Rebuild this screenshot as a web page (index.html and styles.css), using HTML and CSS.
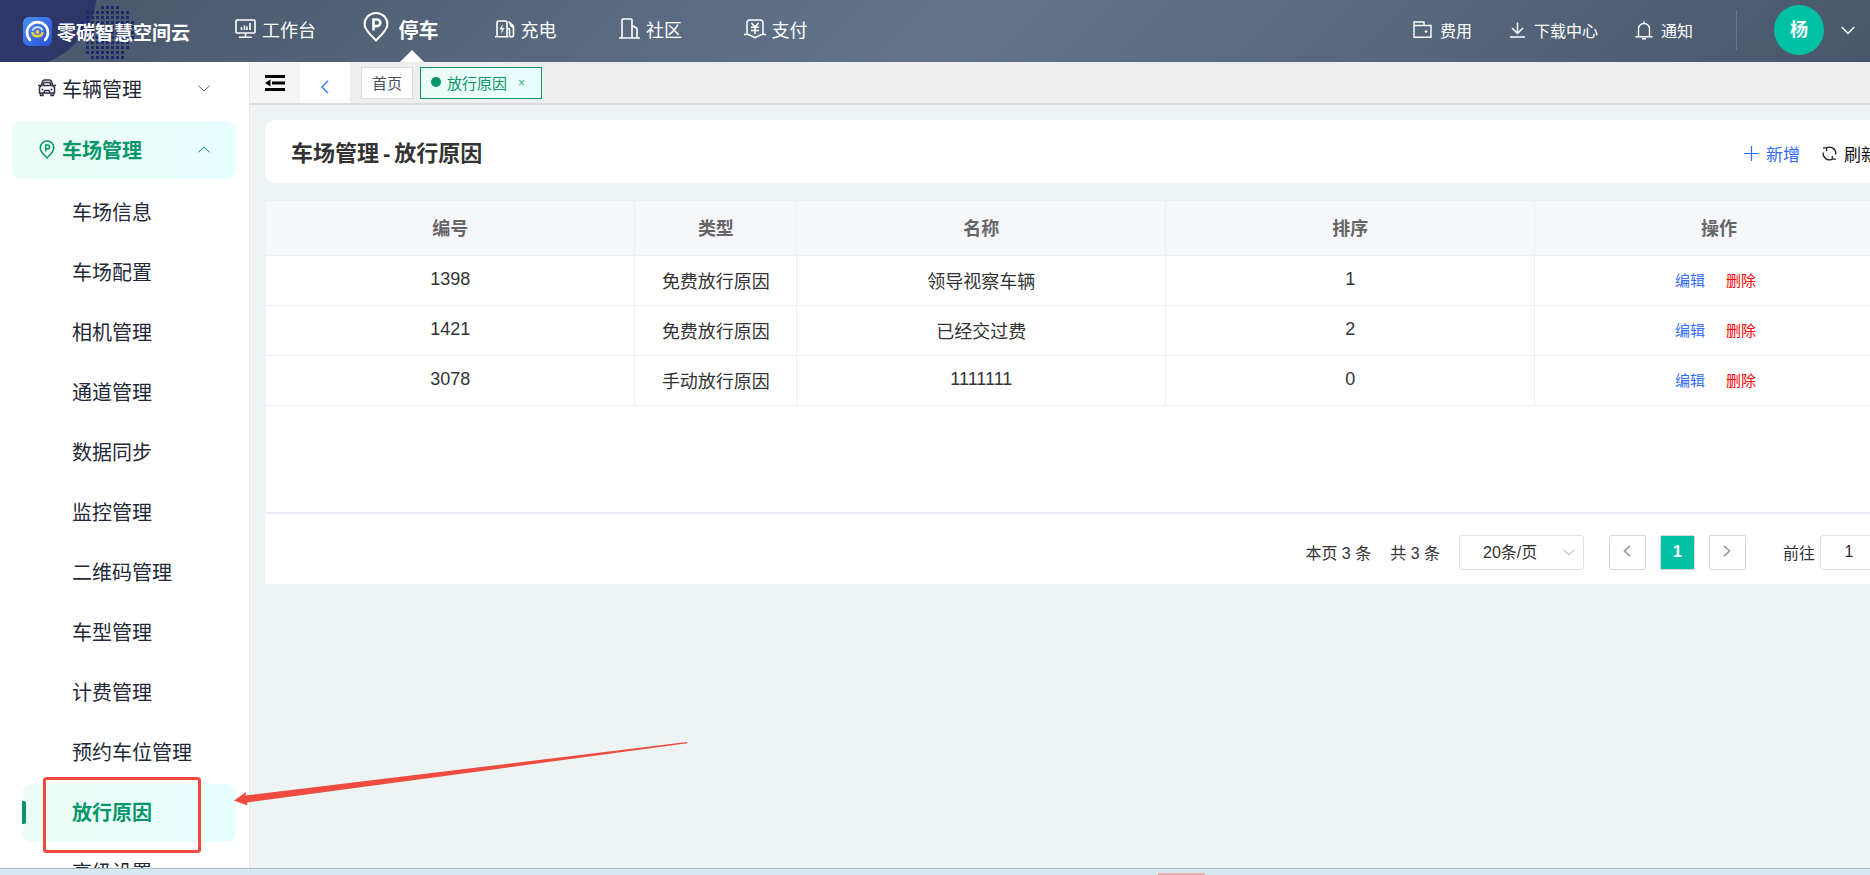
FILE: index.html
```
<!DOCTYPE html>
<html lang="zh-CN">
  <head>
    <meta charset="UTF-8" />
    <meta name="viewport" content="width=device-width, initial-scale=1.0" />
    <title>车场管理-放行原因</title>
    <link rel="stylesheet" href="styles.css">
  </head>
  <body>
    <header class="navbar">
      <svg class="navbar-bg" width="220" height="62" viewBox="0 0 220 62">
        <defs>
          <pattern id="dots" x="81" y="6" width="5" height="5" patternUnits="userSpaceOnUse">
            <rect width="3" height="3" fill="#1b2a6b" />
          </pattern>
        </defs>
        <circle cx="20" cy="-10" r="77" fill="#2e3768" />
        <path d="M101 6h20v5h10v10h5v20h-5v10h-5v9H91v-5h-5V41h-5V21h5V11h15z" fill="url(#dots)" />
      </svg>
      <a class="logo" href="#">
        <svg width="29" height="29" viewBox="0 0 29 29">
          <defs>
            <linearGradient id="logoFill" x1="0" y1="0" x2="1" y2="1">
              <stop offset="0" stop-color="#4a90f5" />
              <stop offset="1" stop-color="#2b50d8" />
            </linearGradient>
          </defs>
          <rect width="29" height="29" rx="6" fill="url(#logoFill)" />
          <path d="M7 23a10.500 10.500 0 1 1 15 0" fill="none" stroke="#fff" stroke-width="2.600" stroke-linecap="round" />
          <path d="M9.600 13.500a5.200 5.200 0 0 1 9.800 0" fill="none" stroke="#dfe9ff" stroke-width="1.800" />
          <path d="M9.300 15a5.300 5.300 0 0 0 10.400 0" fill="none" stroke="#f5cf45" stroke-width="2.400" />
          <circle cx="14.500" cy="15" r="2" fill="#f5cf45" />
        </svg>
        <span>零碳智慧空间云</span>
      </a>
      <nav class="links">
        <a class="link" href="#">
          <svg width="21" height="20" viewBox="0 0 21 20" fill="none" stroke="#fff" stroke-width="1.600">
            <rect x="1" y="1" width="19" height="13" rx="1" />
            <path d="M6.500 11V8M9.500 11V6.500M12 11V7.500M15 11V4M10.500 14v4M4 18.200h13" />
          </svg>
          工作台
        </a>
        <a class="link active" href="#">
          <svg width="26" height="30" viewBox="0 0 26 30" fill="none" stroke="#fff" stroke-width="2">
            <path d="M13 28.500C8 23 1.500 18 1.500 12.200a11.500 11.200 0 0 1 23 0C24.500 18 18 23 13 28.500z" />
            <path d="M10.500 18.500V7.500h3.500a3.300 3.300 0 0 1 0 6.600h-3.500" stroke-width="2.600" />
          </svg>
          停车
        </a>
        <a class="link" href="#">
          <svg width="20" height="20" viewBox="0 0 20 20" fill="none" stroke="#fff" stroke-width="1.600">
            <path d="M2 17.500V3.500A1.500 1.500 0 0 1 3.500 2h7A1.500 1.500 0 0 1 12 3.500v14M0 17.700h13.500M12 9.500h1.500a1 1 0 0 1 1 1v5.500a2 2 0 0 0 4 0V7l-5-4.500" />
            <path d="M7.800 5L4.500 10.500h2.300L6 15l3.600-6H7.300z" fill="#fff" stroke="none" />
            <path d="M14 3l4.500 4v3L15 7z" fill="#fff" stroke="none" />
          </svg>
          充电
        </a>
        <a class="link" href="#">
          <svg width="21" height="21" viewBox="0 0 21 21" fill="none" stroke="#fff" stroke-width="1.600">
            <path d="M3 20V2a1 1 0 0 1 1-1h8a1 1 0 0 1 1 1v18M13 7.500l4.500 2.500a1 1 0 0 1 .5 1v9M0 20h21" />
          </svg>
          社区
        </a>
        <a class="link" href="#">
          <svg width="22" height="20" viewBox="0 0 22 20" fill="none" stroke="#fff" stroke-width="1.500">
            <path d="M3 15V3.500A2.500 2.500 0 0 1 5.500 1h11A2.500 2.500 0 0 1 19 3.500V15M0 15.500h4.500L11 18.700l6.500-3.200H22" />
            <path d="M7.500 4L11 8l3.500-4M11 8v7M7 8.200h8M7 11.500h8" />
          </svg>
          支付
        </a>
      </nav>
      <div class="tools">
        <a href="#">
          <svg width="19" height="18" viewBox="0 0 19 18" fill="none" stroke="#fff" stroke-width="1.400">
            <path d="M1 16.300V1h10v3.500M1 4.500h17v11.800H1z" />
            <circle cx="13" cy="10.500" r="1.300" fill="#fff" stroke="none" />
          </svg>
          费用
        </a>
        <a href="#">
          <svg width="17" height="16" viewBox="0 0 17 16" fill="none" stroke="#fff" stroke-width="1.500">
            <path d="M8.500 0.500v11M3 6l5.500 5.500L14 6M1 15h15" />
          </svg>
          下载中心
        </a>
        <a href="#">
          <svg width="18" height="19" viewBox="0 0 18 19" fill="none" stroke="#fff" stroke-width="1.400">
            <path d="M3.500 15.500V8a5.500 5.500 0 0 1 11 0v7.500M0.500 15.700h17M9 .3v2M7 17.800h4" />
          </svg>
          通知
        </a>
        <span class="divider"></span>
        <button class="user" type="button">
          <span class="avatar">杨</span>
          <svg width="14" height="9" viewBox="0 0 14 9" fill="none" stroke="#fff" stroke-width="1.500">
            <path d="M0.700 1l6.300 6.500L13.300 1" />
          </svg>
        </button>
      </div>
    </header>

    <div class="container">
      <aside class="sidebar">
        <button class="menu-title" type="button">
          <svg class="menu-icon" width="18" height="18" viewBox="0 0 18 18" fill="none" stroke="#303648" stroke-width="1.500">
            <path d="M3 7l1.500-4.500C4.800 1.500 5.500 1 6.500 1h5c1 0 1.700.5 2 1.500L15 7l1.500 1.500v5.500h-15V8.500L3 7zM5 6.500h8l-1-3H6zM0 6.500h2.500M15.500 6.500H18M2.500 14v2.500h2.500V14M13 14v2.500h2.500V14M6 13.500l1-2h4l1 2" />
            <circle cx="4.500" cy="10.500" r="1" fill="#303648" stroke="none" />
            <circle cx="13.500" cy="10.500" r="1" fill="#303648" stroke="none" />
          </svg>
          <span>车辆管理</span>
          <svg class="arrow" width="12" height="7" viewBox="0 0 12 7" fill="none" stroke="#4b5563">
            <path d="M.5 .8L6 6 11.500 .8" />
          </svg>
        </button>
        <button class="menu-title active" type="button">
          <svg class="menu-icon" width="18" height="19" viewBox="0 0 18 19" fill="none" stroke="#059669" stroke-width="1.500">
            <path d="M9 18C6 14.500 2.200 12 2.200 7.700a6.800 6.700 0 0 1 13.600 0C15.800 12 12 14.500 9 18z" />
            <path d="M7.700 11.500V5h2a1.900 1.900 0 0 1 0 3.800h-2" />
          </svg>
          <span>车场管理</span>
          <svg class="arrow" width="12" height="7" viewBox="0 0 12 7" fill="none" stroke="#059669">
            <path d="M.5 6.200L6 1l5.500 5.200" />
          </svg>
        </button>
        <ul class="submenu">
          <li><a href="#">车场信息</a></li>
          <li><a href="#">车场配置</a></li>
          <li><a href="#">相机管理</a></li>
          <li><a href="#">通道管理</a></li>
          <li><a href="#">数据同步</a></li>
          <li><a href="#">监控管理</a></li>
          <li><a href="#">二维码管理</a></li>
          <li><a href="#">车型管理</a></li>
          <li><a href="#">计费管理</a></li>
          <li><a href="#">预约车位管理</a></li>
          <li><a class="active" href="#">放行原因</a></li>
          <li><a href="#">高级设置</a></li>
        </ul>
      </aside>

      <main class="contents">
        <div class="tabs">
          <button class="fold" type="button" aria-label="收起菜单">
            <svg width="20" height="16" viewBox="0 0 20 16" fill="#000">
              <path d="M0 0h20v3H0zM7 6.500h13v3H7zM0 13h20v3H0zM0 8l5.500-3.500v7z" />
            </svg>
          </button>
          <button class="back" type="button" aria-label="返回">
            <svg width="8" height="14" viewBox="0 0 8 14" fill="none" stroke="#3b78ff" stroke-width="1.400">
              <path d="M7 .7L1 7l6 6.300" />
            </svg>
          </button>
          <a class="tab" href="#">首页</a>
          <a class="tab active" href="#"><i class="dot"></i>放行原因<span class="close">×</span></a>
        </div>

        <div class="page">
          <div class="page-title">
            <h1>车场管理<span class="dash">-</span>放行原因</h1>
            <div class="actions">
              <button class="add" type="button">
                <svg width="15" height="15" viewBox="0 0 15 15" stroke="#2f6bff" stroke-width="1.200">
                  <path d="M7.500 0v15M0 7.500h15" />
                </svg>
                新增
              </button>
              <button type="button">
                <svg width="15" height="15" viewBox="0 0 15 15" fill="none" stroke="#222" stroke-width="1.300">
                  <path d="M4 2.200A6.300 6.300 0 0 1 13.700 8.500M11 12.800A6.300 6.300 0 0 1 1.300 6.500M1 1.800h3.700v3.200M14 13.200h-3.700V10" />
                </svg>
                刷新
              </button>
            </div>
          </div>

          <div class="panel">
            <div class="table-box">
              <table>
                <thead>
                  <tr>
                    <th>编号</th>
                    <th class="type">类型</th>
                    <th>名称</th>
                    <th>排序</th>
                    <th>操作</th>
                  </tr>
                </thead>
                <tbody>
                  <tr>
                    <td>1398</td>
                    <td>免费放行原因</td>
                    <td>领导视察车辆</td>
                    <td>1</td>
                    <td><a class="edit" href="#">编辑</a><a class="delete" href="#">删除</a></td>
                  </tr>
                  <tr>
                    <td>1421</td>
                    <td>免费放行原因</td>
                    <td>已经交过费</td>
                    <td>2</td>
                    <td><a class="edit" href="#">编辑</a><a class="delete" href="#">删除</a></td>
                  </tr>
                  <tr>
                    <td>3078</td>
                    <td>手动放行原因</td>
                    <td>1111111</td>
                    <td>0</td>
                    <td><a class="edit" href="#">编辑</a><a class="delete" href="#">删除</a></td>
                  </tr>
                </tbody>
              </table>
            </div>
            <div class="footer">
              <span class="count">本页 3 条</span>
              <span class="count">共 3 条</span>
              <div class="size">
                <select aria-label="每页条数">
                  <option>20条/页</option>
                </select>
                <svg width="12" height="7" viewBox="0 0 12 7" fill="none" stroke="#a8abb2">
                  <path d="M.5 .8L6 6 11.500 .8" />
                </svg>
              </div>
              <div class="pager">
                <button type="button" aria-label="上一页">
                  <svg width="8" height="12" viewBox="0 0 8 12" fill="none" stroke="#999" stroke-width="1.600">
                    <path d="M7 .8L1.500 6 7 11.200" />
                  </svg>
                </button>
                <button class="current" type="button">1</button>
                <button type="button" aria-label="下一页">
                  <svg width="8" height="12" viewBox="0 0 8 12" fill="none" stroke="#999" stroke-width="1.600">
                    <path d="M1 .8L6.500 6 1 11.200" />
                  </svg>
                </button>
              </div>
              <label for="jump">前往</label>
              <input type="text" id="jump" name="jump" value="1" />
            </div>
          </div>
        </div>
      </main>
    </div>

    <div class="taskbar"><span></span></div>

    <!-- annotation -->
    <svg class="mark" width="700" height="875" viewBox="0 0 700 875">
      <rect x="44.500" y="778.500" width="155" height="73" rx="2" fill="none" stroke="#f04b3e" stroke-width="3" />
      <path d="M234 800.500L246 792l-.5 3.500L687 742l.3 1.300L247 802.500l.5 3z" fill="#f04b3e" />
    </svg>
  </body>
</html>
```
FILE: styles.css
```
* {
  box-sizing: border-box;
  font-family: "Liberation Sans", "Noto Sans CJK SC", sans-serif;
}
html {
  overflow: hidden;
}
body {
  margin: 0;
  min-width: 1920px;
  height: 100vh;
  display: flex;
  flex-direction: column;
  overflow: hidden;
  color: #333;
  background-color: #eef4f4;
}
a {
  color: inherit;
  text-decoration: none;
}
button {
  border: none;
  padding: 0;
  background: none;
  cursor: pointer;
}
svg {
  flex-shrink: 0;
}
.navbar {
  position: relative;
  z-index: 1;
  flex-shrink: 0;
  display: flex;
  align-items: center;
  height: 62px;
  color: white;
  background: linear-gradient(135deg, #475569, #64748b 50%, #475569);
}
.navbar-bg {
  position: absolute;
  left: 0;
  top: 0;
}
.logo {
  position: relative;
  display: flex;
  align-items: center;
  gap: 5px;
  width: 213px;
  padding-left: 23px;
  font-size: 19px;
  font-weight: bold;
}
.links {
  display: flex;
  align-self: stretch;
}
.link {
  position: relative;
  display: flex;
  align-items: center;
  justify-content: center;
  gap: 6px;
  width: 125px;
  padding-bottom: 5px;
  font-size: 18px;
}
.link.active {
  gap: 10px;
  padding-bottom: 3px;
  font-size: 20px;
  font-weight: bold;
}
.link.active svg {
  margin-bottom: 6px;
}
.link.active::after {
  content: "";
  position: absolute;
  bottom: 0;
  left: 50%;
  margin-left: -1px;
  border: 12px solid transparent;
  border-top: none;
  border-bottom-color: white;
}
.tools {
  display: flex;
  align-items: center;
  gap: 37px;
  margin-left: auto;
  padding: 0 65px 2px 0;
  font-size: 16px;
}
.tools a {
  display: flex;
  align-items: center;
  gap: 8px;
}
.divider {
  width: 1px;
  height: 40px;
  margin-left: 6px;
  background-color: #6b7a90;
}
.user {
  display: flex;
  align-items: center;
  gap: 17px;
}
.avatar {
  width: 50px;
  height: 50px;
  border-radius: 50%;
  line-height: 50px;
  font-size: 18px;
  font-weight: bold;
  color: white;
  background-color: #00c1a4;
}
.container {
  flex: 1;
  display: flex;
  min-height: 0;
}
.sidebar {
  flex-shrink: 0;
  width: 250px;
  margin-top: -2px;
  padding: 0 13px 0 12px;
  overflow: hidden;
  border-right: 1px solid #e4e7ed;
  background-color: white;
}
.menu-title {
  display: flex;
  align-items: center;
  width: 224px;
  height: 58px;
  margin-bottom: 3px;
  padding: 0 26px 2px;
  border-radius: 10px;
  font-size: 20px;
  color: #1f2937;
}
.menu-title span {
  margin-left: 6px;
}
.menu-title .arrow {
  margin-left: auto;
}
.menu-title.active,
.submenu a.active {
  font-weight: bold;
  color: #059669;
  background: linear-gradient(90deg, #ecfdf5, #e8feff);
}
.submenu {
  margin: 0;
  padding: 2px 0 0 10px;
  list-style: none;
}
.submenu a {
  position: relative;
  display: block;
  height: 58px;
  margin: 0 0 2px;
  padding-left: 50px;
  border-radius: 10px;
  line-height: 58px;
  font-size: 20px;
  color: #1f2937;
}
.submenu a.active::before {
  content: "";
  position: absolute;
  left: 0;
  top: 17px;
  width: 4px;
  height: 23px;
  border-radius: 0 2px 2px 0;
  background-color: #059669;
}
.contents {
  flex: 1;
  min-width: 0;
}
.tabs {
  display: flex;
  align-items: center;
  height: 43px;
  border-bottom: 2px solid #dcdde0;
  background-color: #eee;
}
.fold {
  align-self: stretch;
  width: 50px;
  padding-top: 4px;
  background-color: #f5f5f5;
}
.back {
  align-self: stretch;
  width: 50px;
  margin-right: 11px;
  padding-top: 12px;
  background-color: white;
}
.tab {
  display: flex;
  align-items: center;
  height: 32px;
  margin-right: 7px;
  padding: 0 10px 1px;
  border: 1px solid #d8dce5;
  font-size: 15px;
  color: #495060;
  background-color: white;
}
.tab.active {
  border-color: #059669;
  color: #059669;
  background: linear-gradient(90deg, #ecfdf5, #e8feff);
}
.dot {
  width: 10px;
  height: 10px;
  margin-right: 6px;
  border-radius: 50%;
  background-color: #059669;
}
.close {
  margin: 2px 6px 0 11px;
  font-size: 12px;
  opacity: 0.8;
}
.page {
  padding: 15px 16px 0 15px;
}
.page-title {
  display: flex;
  align-items: center;
  justify-content: space-between;
  height: 63px;
  margin-bottom: 17px;
  padding: 0 26px;
  border-radius: 10px;
  background-color: white;
}
h1 {
  margin: 0;
  padding-bottom: 2px;
  font-size: 22px;
}
.dash {
  margin: 0 4px;
}
.actions {
  display: flex;
  gap: 22px;
  padding-top: 3px;
}
.actions button {
  display: flex;
  align-items: center;
  gap: 7px;
  font-size: 17px;
  color: #111;
}
.actions .add {
  color: #2f6bff;
}
.panel {
  background-color: white;
}
.table-box {
  height: 314px;
  border-left: 1px solid #ebeef5;
  border-bottom: 2px solid #e8ebf2;
}
table {
  width: 100%;
  table-layout: fixed;
  border-collapse: collapse;
}
th,
td {
  padding: 0 0 2px;
  border: 1px solid #ebeef5;
  border-left: none;
  text-align: center;
}
th {
  height: 55px;
  font-size: 18px;
  color: #666;
  background-color: #f5f7fb;
}
.type {
  width: 162px;
}
td {
  height: 50px;
  font-size: 18px;
}
td a {
  font-size: 15px;
}
.edit {
  margin-right: 21px;
  color: #2f6bff;
}
.delete {
  margin-right: 7px;
  color: #f00;
}
.footer {
  display: flex;
  align-items: center;
  justify-content: flex-end;
  height: 70px;
  padding: 6px 26px 0 0;
  font-size: 16px;
}
.count {
  margin-right: 19px;
}
.size {
  position: relative;
}
.size select {
  appearance: none;
  width: 125px;
  height: 35px;
  padding: 0 23px;
  border: 1px solid #dcdfe6;
  border-radius: 3px;
  font-size: 16px;
  color: #333;
  background-color: white;
}
.size svg {
  position: absolute;
  right: 9px;
  top: 14px;
}
.pager {
  display: flex;
  gap: 14px;
  margin: 0 37px 0 25px;
}
.pager button {
  width: 37px;
  height: 35px;
  border: 1px solid #d4d7de;
  border-radius: 2px;
  font-size: 16px;
}
.pager .current {
  width: 35px;
  font-weight: bold;
  color: white;
  background-color: #00c1a4;
}
.footer input {
  width: 58px;
  height: 35px;
  margin-left: 5px;
  border: 1px solid #dcdfe6;
  border-radius: 4px;
  text-align: center;
  font-size: 16px;
  color: #333;
}
.taskbar {
  position: relative;
  flex-shrink: 0;
  height: 7px;
  border-top: 1px solid #a9b8c2;
  background-color: #d6e9f1;
}
.taskbar span {
  position: absolute;
  left: 1158px;
  bottom: 0;
  width: 47px;
  height: 2px;
  background-color: #efaaa8;
}
.mark {
  position: absolute;
  left: 0;
  top: 0;
  z-index: 2;
  pointer-events: none;
}
```
